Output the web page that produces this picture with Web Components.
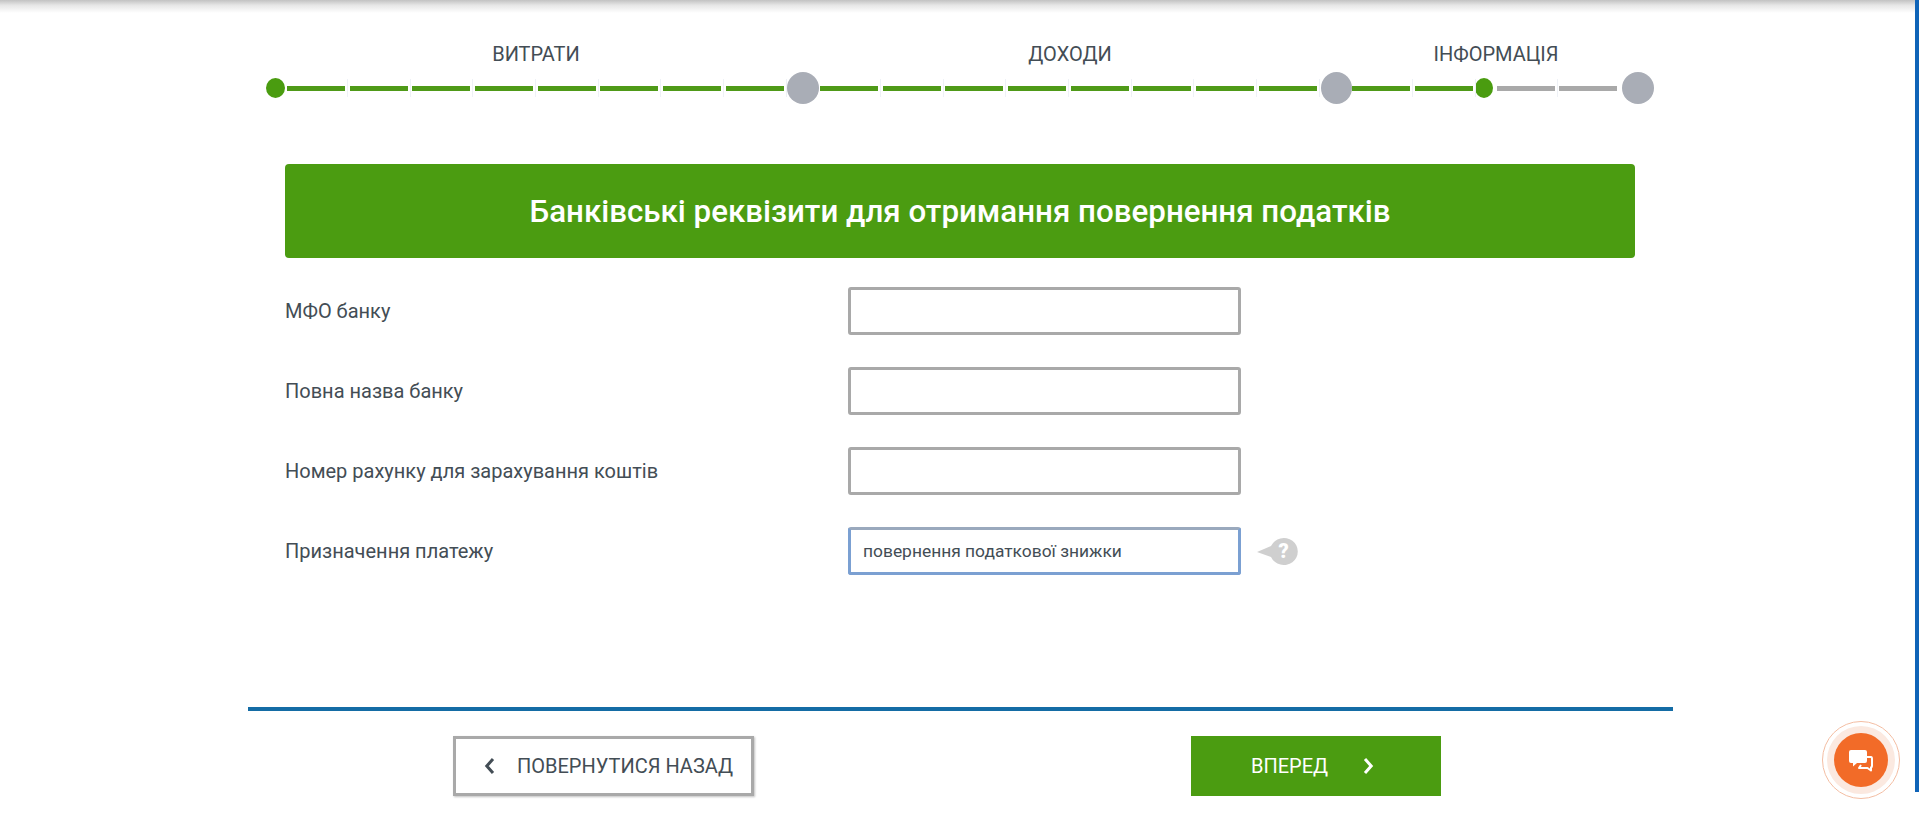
<!DOCTYPE html>
<html lang="uk">
<head>
<meta charset="utf-8">
<title>Банківські реквізити</title>
<style>
  html, body { margin: 0; height: 100%; background: #fff; overflow: hidden; }
  body { font-family: Roboto, "Liberation Sans", sans-serif; color: #434d55; }
</style>
</head>
<body>
<tax-page>
  <step-track></step-track>
  <form-banner>Банківські реквізити для отримання повернення податків</form-banner>
  <form-row label="МФО банку"></form-row>
  <form-row label="Повна назва банку"></form-row>
  <form-row label="Номер рахунку для зарахування коштів"></form-row>
  <form-row label="Призначення платежу" focused hint>повернення податкової знижки</form-row>
  <nav-bar>
    <nav-button dir="back">ПОВЕРНУТИСЯ НАЗАД</nav-button>
    <nav-button dir="next">ВПЕРЕД</nav-button>
  </nav-bar>
</tax-page>
<chat-fab></chat-fab>

<script>
// Каркас сторінки: тінь шапки, синя смуга справа і колонка контенту
class TaxPage extends HTMLElement {
  constructor() {
    super();
    this.attachShadow({ mode: 'open' });
    this.shadowRoot.innerHTML = `
      <style>
        :host { display: block; height: 834px; position: relative; overflow: hidden; }
        .shade { position: absolute; top: 0; left: 0; right: 4px; height: 13px; background: linear-gradient(#c2c2c2, #e6e6e6 40%, #fff); }
        .bar { position: absolute; top: 0; right: 0; width: 4px; height: 792px; background: #0f64b8; }
        .col { position: relative; display: flex; flex-direction: column; margin-left: 248px; width: 1425px; }
      </style>
      <div class="shade"></div>
      <div class="bar"></div>
      <div class="col"><slot></slot></div>`;
  }
}

// Степер: підписи секцій і лінія з сегментів
class StepTrack extends HTMLElement {
  constructor() {
    super();
    this.attachShadow({ mode: 'open' });
    const seg = (off, gap = 4.7) => `<i class="seg${off ? ' off' : ''}" style="margin-right:${gap}px"></i>`;
    const run = (n, gap, last) => Array.from({ length: n }, (_, i) => seg(false, i === n - 1 ? last : gap)).join('');
    this.shadowRoot.innerHTML = `
      <style>
        :host { display: block; padding: 42px 0 0 18px; }
        .labels { display: grid; grid-template-columns: 540px 528px 324px; font-size: 20px; line-height: 24px; text-align: center; color: #434d55; }
        .line { display: flex; align-items: center; height: 32px; margin-top: 6px; }
        .dot { flex: none; border-radius: 50%; background: #4a9c10; width: 19px; height: 20px; }
        .node { flex: none; border-radius: 50%; background: #a9adb6; width: 32px; height: 32px; }
        .seg { flex: none; width: 58px; height: 5px; background: #4f9a18; position: relative; }
        .seg.off { background: #a9a9a9; }
        .seg::after { content: ''; position: absolute; right: -3px; top: -7px; width: 1px; height: 18px; background: #eef1f6; }
        .seg:last-of-type::after { display: none; }
      </style>
      <div class="labels"><span>ВИТРАТИ</span><span>ДОХОДИ</span><span>ІНФОРМАЦІЯ</span></div>
      <div class="line">
        <span class="dot" style="margin-right:2px"></span>
        ${run(8, 4.7, 3.1)}
        <span class="node" style="margin-right:1px"></span>
        ${run(8, 4.7, 4.1)}
        <span class="node" style="width:31px;margin-right:.5px"></span>
        ${run(2, 4.5, 2.5)}
        <span class="dot" style="width:18px;margin-right:4px"></span>
        ${seg(true, 4)}${seg(true, 4.5)}
        <span class="node"></span>
      </div>`;
  }
}

class FormBanner extends HTMLElement {
  constructor() {
    super();
    this.attachShadow({ mode: 'open' });
    this.shadowRoot.innerHTML = `
      <style>
        :host { display: flex; align-items: center; justify-content: center; box-sizing: border-box;
          margin: 60px 0 29px 37px; width: 1350px; height: 94px; border-radius: 4px;
          background: #4b9c11; color: #fff; font-size: 31.3px; font-weight: 500; }
      </style>
      <slot></slot>`;
  }
}

// Рядок форми: підпис, поле і необов'язкова підказка
class FormRow extends HTMLElement {
  constructor() {
    super();
    this.attachShadow({ mode: 'open' });
    const hint = this.hasAttribute('hint') ? `
      <svg class="hint" width="42" height="28" viewBox="0 0 42 28">
        <path d="M0 15 L14 9 A14 13.5 0 1 1 14 20 Z" fill="#cfcfcf"/>
        <text x="26.5" y="20.5" text-anchor="middle" font-family="Roboto, sans-serif" font-weight="900" font-size="20" fill="#fff">?</text>
      </svg>` : '';
    this.shadowRoot.innerHTML = `
      <style>
        :host { display: flex; align-items: center; margin: 0 0 32px 37px; height: 48px; font-size: 20px; color: #434d55; }
        .label { flex: none; width: 563px; }
        .field { flex: none; box-sizing: border-box; width: 393px; height: 48px; padding: 0 12px;
          border: 3px solid #a9a9a9; border-radius: 3px; background: #fff;
          display: flex; align-items: center; font-size: 17.4px; }
        :host([focused]) .field { border-color: #9aa9bd #7ba0d2 #7ba0d2; }
        .hint { flex: none; margin-left: 16px; }
      </style>
      <span class="label">${this.getAttribute('label')}</span>
      <div class="field"><slot></slot></div>${hint}`;
  }
}

class NavBar extends HTMLElement {
  constructor() {
    super();
    this.attachShadow({ mode: 'open' });
    this.shadowRoot.innerHTML = `
      <style>
        :host { display: flex; gap: 437px; margin-top: 100px; padding: 25px 0 0 205px; border-top: 4px solid #146ca5; }
      </style>
      <slot></slot>`;
  }
}

class NavButton extends HTMLElement {
  constructor() {
    super();
    this.attachShadow({ mode: 'open' });
    const back = this.getAttribute('dir') === 'back';
    const chevron = `<svg width="11" height="18" viewBox="0 0 11 18"><path d="${back ? 'M9 2 L2.8 9 L9 16' : 'M2 2 L8.2 9 L2 16'}" fill="none" stroke="currentColor" stroke-width="3"/></svg>`;
    this.shadowRoot.innerHTML = `
      <style>
        :host { display: flex; align-items: center; box-sizing: border-box; height: 60px; font-size: 20px; }
        :host([dir=back]) { width: 301px; padding-left: 28px; gap: 22px; border: 3px solid #a9a9a9; color: #434d55; box-shadow: 1px 1px 2px rgba(0,0,0,.25); }
        :host([dir=next]) { width: 250px; padding-left: 60px; gap: 35px; background: #4b9c11; color: #fff; }
        svg { flex: none; }
      </style>
      ${back ? chevron : ''}<span><slot></slot></span>${back ? '' : chevron}`;
  }
}

// Плаваюча кнопка чату
class ChatFab extends HTMLElement {
  constructor() {
    super();
    this.attachShadow({ mode: 'open' });
    this.shadowRoot.innerHTML = `
      <style>
        :host { position: fixed; left: 1822px; top: 721px; width: 78px; height: 78px; box-sizing: border-box;
          display: flex; align-items: center; justify-content: center; border-radius: 50%; border: 1px solid #f3bda2; }
        .disc { width: 54px; height: 54px; border-radius: 50%; background: #f26b28; box-shadow: 0 0 0 7px #fbe9e0;
          display: flex; align-items: center; justify-content: center; }
      </style>
      <div class="disc">
        <svg width="26" height="24" viewBox="0 0 26 24">
          <path d="M19 9 H23 Q24 9 24 11 V18 Q24 19 23 19.5 V22.5 L19.5 20 H11 L13 17" fill="none" stroke="#fff" stroke-width="2" stroke-linejoin="round"/>
          <path d="M3 2 H17 Q19 2 19 4 V13 Q19 15 17 15 H9 L5 18.5 V15 H3 Q1 15 1 13 V4 Q1 2 3 2 Z" fill="#fff"/>
        </svg>
      </div>`;
  }
}

customElements.define('tax-page', TaxPage);
customElements.define('step-track', StepTrack);
customElements.define('form-banner', FormBanner);
customElements.define('form-row', FormRow);
customElements.define('nav-bar', NavBar);
customElements.define('nav-button', NavButton);
customElements.define('chat-fab', ChatFab);
</script>
</body>
</html>
